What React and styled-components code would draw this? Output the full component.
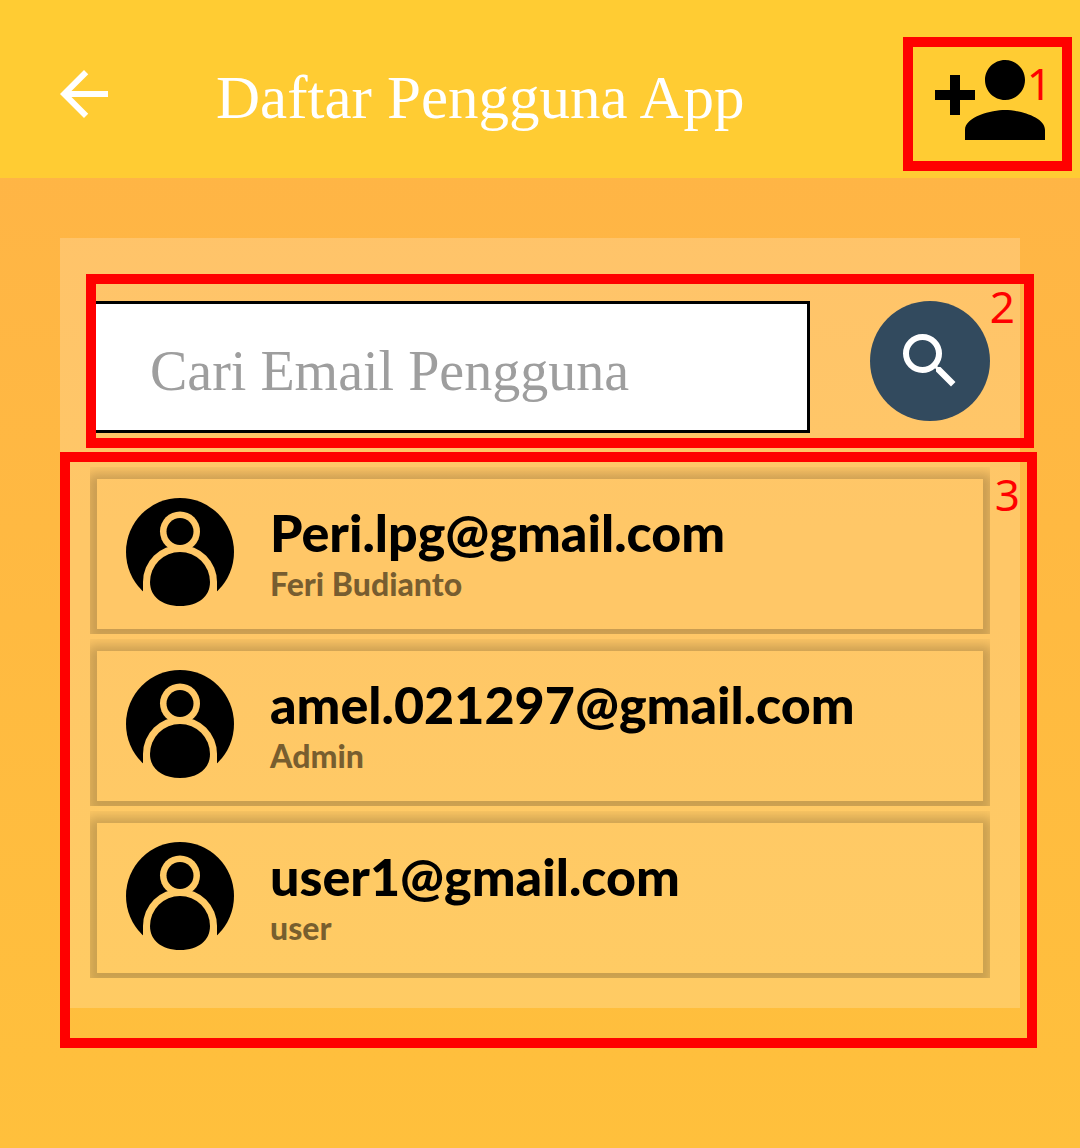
import React from "react";
import styled, { createGlobalStyle } from "styled-components";
import { MdArrowBack, MdPersonAdd, MdSearch } from "react-icons/md";

const GlobalStyle = createGlobalStyle`
  *, *::before, *::after { box-sizing: border-box; }
  body {
    margin: 0;
    background: #ffb347;
    font-family: Lato, "Open Sans", sans-serif;
  }
`;

const Screen = styled.div`
  min-height: 100vh;
  overflow: hidden;
  background: linear-gradient(#ffb347, #ffc03c);
`;

const Header = styled.header`
  display: flex;
  align-items: flex-start;
  padding: 40px 30px 18px 48px;
  background: #ffcc33;
`;

const IconButton = styled.button`
  display: grid;
  place-items: center;
  flex: none;
  width: ${(p) => p.$width}px;
  height: ${(p) => p.$height}px;
  padding: 0;
  border: 0;
  border-radius: ${(p) => (p.$round ? "50%" : "0")};
  background: ${(p) => p.$fill || "transparent"};
  color: ${(p) => p.$color};
  cursor: pointer;

  svg { display: block; }
`;

const Title = styled.h1`
  flex: 1;
  margin: 0 0 0 96px;
  color: #fff;
  font: 400 61px/116px "Liberation Serif", serif;
  white-space: nowrap;
`;

const Marked = styled.div`
  position: relative;
`;

const Marker = styled.div`
  position: absolute;
  inset: ${(p) => p.$inset};
  border: 10px solid #ff0000;
  pointer-events: none;
`;

const MarkerNumber = styled.span`
  position: absolute;
  top: ${(p) => p.$top}px;
  right: ${(p) => p.$right}px;
  color: #ff0000;
  font: 400 44px/48px "Noto Sans", sans-serif;
`;

const Panel = styled.main`
  margin: 60px;
  padding: 63px 30px 30px;
  background: rgba(255, 255, 255, 0.2);
`;

const SearchForm = styled.form`
  display: flex;
  align-items: flex-start;
  gap: 60px;
`;

const SearchInput = styled.input`
  flex: 1;
  min-width: 0;
  height: 132px;
  padding: 8px 57px 0;
  border: 3px solid #000;
  border-radius: 0;
  background: #fff;
  color: #000;
  font: 400 56px "Liberation Serif", serif;

  &::placeholder { color: #9e9e9e; opacity: 1; }
`;

const UserList = styled.ul`
  display: grid;
  gap: 5px;
  margin: 34px 0 0;
  padding: 0;
  list-style: none;
`;

const UserCard = styled.li`
  padding: 12px 7px 5px;
  overflow: hidden;
`;

const UserBody = styled.div`
  display: flex;
  align-items: flex-start;
  gap: 36px;
  padding: 19px 29px 23px;
  box-shadow: 0 4px 12px 10px rgba(0, 0, 0, 0.21);
`;

const UserText = styled.div`
  padding-top: 4px;
  white-space: nowrap;
`;

const Email = styled.div`
  color: #000;
  font-size: 52px;
  font-weight: 900;
  line-height: 60px;
`;

const Role = styled.div`
  color: rgba(0, 0, 0, 0.54);
  font-size: 32px;
  font-weight: 900;
  line-height: 44px;
`;

const users = [
  { email: "Peri.lpg@gmail.com", role: "Feri Budianto" },
  { email: "amel.021297@gmail.com", role: "Admin" },
  { email: "user1@gmail.com", role: "user" },
];

function Avatar({ id }) {
  return (
    <svg width="108" height="108" viewBox="0 0 108 108" aria-hidden="true">
      <mask id={id}>
        <rect width="108" height="108" fill="#fff" />
        <circle cx="54" cy="33.5" r="20" fill="#000" />
        <path d="M17 108V84a37 37 0 0 1 74 0v24z" fill="#000" />
      </mask>
      <circle cx="54" cy="54" r="54" mask={`url(#${id})`} />
      <circle cx="54" cy="33.5" r="13.5" />
      <path d="M24 84a30 30 0 0 1 60 0C84 98 73 108 54 108S24 98 24 84z" />
    </svg>
  );
}

export default function App() {
  return (
    <Screen>
      <GlobalStyle />
      <Header>
        <IconButton type="button" aria-label="Kembali" $width={72} $height={108} $color="#fff">
          <MdArrowBack size={72} />
        </IconButton>
        <Title>Daftar Pengguna App</Title>
        <Marked>
          <IconButton type="button" aria-label="Tambah pengguna" $width={120} $height={120} $color="#000">
            <MdPersonAdd size={120} />
          </IconButton>
          <Marker $inset="-3px -22px -11px -27px">
            <MarkerNumber $top={12} $right={10}>1</MarkerNumber>
          </Marker>
        </Marked>
      </Header>
      <Panel>
        <Marked>
          <SearchForm onSubmit={(e) => e.preventDefault()}>
            <SearchInput type="text" aria-label="Cari Email Pengguna" placeholder="Cari Email Pengguna" />
            <IconButton type="submit" aria-label="Cari" $width={120} $height={120} $round $fill="#324a5e" $color="#fff">
              <MdSearch size={72} />
            </IconButton>
          </SearchForm>
          <Marker $inset="-27px -44px -15px -4px">
            <MarkerNumber $top={-2} $right={9}>2</MarkerNumber>
          </Marker>
        </Marked>
        <Marked>
          <UserList>
            {users.map((user, i) => (
              <UserCard key={user.email}>
                <UserBody>
                  <Avatar id={`avatar-${i}`} />
                  <UserText>
                    <Email>{user.email}</Email>
                    <Role>{user.role}</Role>
                  </UserText>
                </UserBody>
              </UserCard>
            ))}
          </UserList>
          <Marker $inset="-15px -47px -70px -30px">
            <MarkerNumber $top={8} $right={7}>3</MarkerNumber>
          </Marker>
        </Marked>
      </Panel>
    </Screen>
  );
}
